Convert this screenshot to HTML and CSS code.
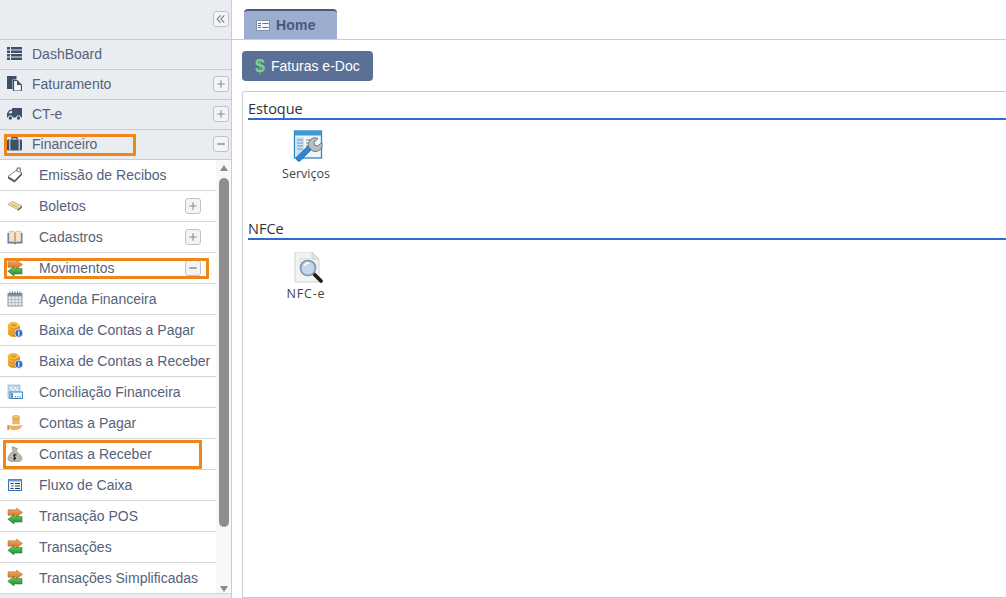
FILE: index.html
```html
<!DOCTYPE html>
<html lang="pt">
<head>
<meta charset="utf-8">
<title>Home</title>
<link rel="stylesheet" href="styles.css">
</head>
<body>
<svg class="defs" width="0" height="0">
  <defs>
    <linearGradient id="orangeG" x1="0" y1="0" x2="0" y2="1"><stop offset="0" stop-color="#f6b26a"/><stop offset="1" stop-color="#d9691c"/></linearGradient>
    <linearGradient id="greenG" x1="0" y1="0" x2="0" y2="1"><stop offset="0" stop-color="#6fd05c"/><stop offset="1" stop-color="#178a2a"/></linearGradient>
    <linearGradient id="coinG" x1="0" y1="0" x2="1" y2="0"><stop offset="0" stop-color="#f6b93c"/><stop offset="1" stop-color="#df7f14"/></linearGradient>
    <symbol id="swap" viewBox="0 0 16 16">
      <path d="M1 1.800h8.500V0L15.500 4.500 9.500 9V7.200H1z" fill="url(#orangeG)" stroke="#8c6a3a" stroke-width=".5"/>
      <path d="M15 8.500H7V6.500L.8 11.200 7 16v-2h8z" fill="url(#greenG)" stroke="#1f6e2a" stroke-width=".5"/>
    </symbol>
    <symbol id="coins" viewBox="0 0 16 16">
      <path d="M1 4.200v7.300C1 13.500 3.500 15 7 15s6-1.500 6-3.500V4.200z" fill="url(#coinG)"/>
      <path d="M1 8.100c1 1.700 3.500 2.500 6 2.500s5-.8 6-2.500M1 11c1 1.700 3.500 2.500 6 2.500s5-.8 6-2.500" fill="none" stroke="#c8781c" stroke-width=".7"/>
      <ellipse cx="6.500" cy="3.500" rx="5.500" ry="3" fill="#f8c24a" stroke="#dc8a1c" stroke-width=".6"/>
      <ellipse cx="6.500" cy="3.300" rx="3" ry="1.400" fill="#e9961f"/>
      <circle cx="11.800" cy="11.200" r="4" fill="#2a68bd" stroke="#eef3fa" stroke-width=".8"/>
      <rect x="11.200" y="8.800" width="1.200" height="5" fill="#fff"/>
    </symbol>
    <symbol id="plus" viewBox="0 0 15 15">
      <path d="M3.500 7.500h8M7.500 3.500v8" stroke="#8a8f96" stroke-width="1.200"/>
    </symbol>
    <symbol id="minus" viewBox="0 0 15 15">
      <path d="M3.500 7.500h8" stroke="#8a8f96" stroke-width="1.600"/>
    </symbol>
  </defs>
</svg>

<div class="app">
  <aside class="sidebar">
    <div class="side-top">
      <span class="tog"><svg viewBox="0 0 15 15"><path d="M7 3.500 3.500 7.500 7 11.500M11 3.500 7.500 7.500 11 11.500" fill="none" stroke="#777" stroke-width="1.200"/></svg></span>
    </div>

    <div class="group">
      <svg class="gicon" viewBox="0 0 15 15"><path d="M0 1h3v2.400H0zM4 1h11v2.400H4zM0 4.500h3v2.400H0zM4 4.500h11v2.400H4zM0 8h3v2.400H0zM4 8h11v2.400H4zM0 11.500h3v2.400H0zM4 11.500h11v2.400H4z" fill="#3f4f68"/></svg>
      <span>DashBoard</span>
    </div>
    <div class="group">
      <svg class="gicon" viewBox="0 0 15 15"><path d="M0 0h9.500v3.500H5.500V13H0z" fill="#3f4f68"/><path d="M6.500 4.500H10l4.500 4.500v6h-8z" fill="#f4f6f8" stroke="#3f4f68" stroke-width="1.200"/><path d="M10 4.500V9h4.500z" fill="#3f4f68"/></svg>
      <span>Faturamento</span>
      <span class="tog"><svg><use href="#plus"/></svg></span>
    </div>
    <div class="group">
      <svg class="gicon" viewBox="0 0 15 15"><path d="M5 2h10v9.500H0V7.200L2.500 3.800H5z" fill="#3f4f68"/><path d="M1.500 7.300 3.200 5H5v2.300z" fill="#e9edf1"/><circle cx="3.300" cy="12" r="2.200" fill="#3f4f68" stroke="#e9edf1"/><circle cx="11.500" cy="12" r="2.200" fill="#3f4f68" stroke="#e9edf1"/></svg>
      <span>CT-e</span>
      <span class="tog"><svg><use href="#plus"/></svg></span>
    </div>
    <div class="group">
      <svg class="gicon" viewBox="0 0 15 15"><path d="M5 3.500V1.500h5v2" fill="none" stroke="#3f4f68" stroke-width="1.300"/><rect x="0" y="3.500" width="15" height="11" rx="1.200" fill="#3f4f68"/><path d="M2.800 3.500v11M12.200 3.500v11" stroke="#e9edf1"/></svg>
      <span>Financeiro</span>
      <span class="tog"><svg><use href="#minus"/></svg></span>
      <i class="mark mark-fin"></i>
    </div>

    <div class="sub">
      <ul class="sub-list">
        <li>
          <svg class="icon" viewBox="0 0 16 16"><path d="M1 9.500v2l6.500 4 7.500-7.500V6z" fill="#4d5564"/><path d="M1 9.500 9 3.500l6 2.500-7.500 7.500z" fill="#fff" stroke="#5c6472" stroke-width=".8"/><path d="M9.500 4 10.500 1h2.500l.5 3.500" fill="none" stroke="#68707c" stroke-width="1.200"/></svg>
          Emissão de Recibos
        </li>
        <li>
          <svg class="icon" viewBox="0 0 16 16"><path d="M1 6.500 5.500 3.500 15 8l-4.500 3.500z" fill="#e9dca4" stroke="#b3a572" stroke-width=".8"/><path d="M5 6.500l5 2.500" stroke="#bfae70"/><path d="M10.500 11.500 15 8v1.500l-4 3.500z" fill="#5c6b55"/></svg>
          Boletos
          <span class="tog"><svg><use href="#plus"/></svg></span>
        </li>
        <li>
          <svg class="icon" viewBox="0 0 16 16"><path d="M.5 4v10.500H6.500L8 15.500 9.500 14.500h6V4" fill="#4f7cb0"/><path d="M2 2.500c2.500-.8 4.800-.4 6 1 1.200-1.400 3.500-1.800 6-1v10.500c-2.500-.6-4.800-.4-6 1-1.200-1.400-3.500-1.600-6-1z" fill="#f4e3c6" stroke="#c9a97a" stroke-width=".6"/><path d="M8 3.500V14" stroke="#8a7a60"/></svg>
          Cadastros
          <span class="tog"><svg><use href="#plus"/></svg></span>
        </li>
        <li>
          <svg class="icon"><use href="#swap"/></svg>
          Movimentos
          <span class="tog"><svg><use href="#minus"/></svg></span>
          <i class="mark mark-mov"></i>
        </li>
        <li>
          <svg class="icon" viewBox="0 0 16 16"><rect x="1" y="2.500" width="14" height="12.500" fill="#e6eaee" stroke="#8b96a3"/><rect x="1" y="2.500" width="14" height="3" fill="#8b96a3"/><path d="M3 .5v3M5.500 .5v3M8 .5v3M10.500 .5v3M13 .5v3" stroke="#5d6672"/><path d="M1 8.500h14M1 11.500h14M4.500 5.500V15M8 5.500V15M11.500 5.500V15" stroke="#a5aeb8" stroke-width=".7"/></svg>
          Agenda Financeira
        </li>
        <li><svg class="icon"><use href="#coins"/></svg>Baixa de Contas a Pagar</li>
        <li><svg class="icon"><use href="#coins"/></svg>Baixa de Contas a Receber</li>
        <li>
          <svg class="icon" viewBox="0 0 16 16"><rect x="1" y="1" width="12" height="13" fill="#bcd8f0" stroke="#8db4d6" stroke-width=".7"/><path d="M3 3h2v2H3zM7 3h2v2H7zM5 5h2v2H5zM9 5h2v2H9z" fill="#e4f0fa"/><rect x="3" y="8" width="12.500" height="6.500" fill="#fff" stroke="#2f86c8"/><path d="M5 10v3M4 10h2M4 13h2M8 12.800h1M10.300 12.800h1M12.600 12.800h1" stroke="#2a2f38" stroke-width=".9"/></svg>
          Conciliação Financeira
        </li>
        <li>
          <svg class="icon" viewBox="0 0 16 16"><ellipse cx="9" cy="2.500" rx="3.500" ry="2" fill="#f5c878" stroke="#c48c36" stroke-width=".6"/><rect x="5.500" y="3.500" width="7" height="2.500" rx="1" fill="#eeb053" stroke="#c48c36" stroke-width=".4"/><rect x="5.500" y="6.500" width="7" height="2.500" rx="1" fill="#f2bc62" stroke="#c48c36" stroke-width=".4"/><path d="M2 10.500h3.500l3 .5 7-1-2 3.500-4 1.500H5L2 13.500z" fill="#efb25a"/><rect x=".5" y="10" width="1.200" height="5" fill="#9c7230"/></svg>
          Contas a Pagar
        </li>
        <li>
          <svg class="icon" viewBox="0 0 16 16"><path d="M5 .5 10.500 2.500 9 5.500c3 1.500 6 4.800 6 7.500 0 2-3 2.800-7 2.800-3.500 0-7-.6-7-2.800 0-3 2.200-6 5-7.700z" fill="#b9b9b0" stroke="#85857c" stroke-width=".6"/><path d="M7.500 7.500v7M9.500 9c-2.500-1-3.700.6-2 1.600s1.500 3-1.500 1.900" fill="none" stroke="#2e2e2a" stroke-width="1.100"/></svg>
          Contas a Receber
          <i class="mark mark-rec"></i>
        </li>
        <li>
          <svg class="icon" viewBox="0 0 16 16"><rect x="1.500" y="2.500" width="13" height="11" fill="#f4f7fb" stroke="#3f6ea8"/><rect x="1.500" y="2.500" width="13" height="2" fill="#6f9ad0"/><path d="M3.500 6.500h3M4.500 9h2M3.500 11.500h3M8 6.500h5M8 9h5M8 11.500h5" stroke="#2d3a50"/></svg>
          Fluxo de Caixa
        </li>
        <li><svg class="icon"><use href="#swap"/></svg>Transação POS</li>
        <li><svg class="icon"><use href="#swap"/></svg>Transações</li>
        <li><svg class="icon"><use href="#swap"/></svg>Transações Simplificadas</li>
      </ul>
      <div class="scroll">
        <span class="arrow up"></span>
        <span class="thumb"></span>
        <span class="arrow down"></span>
      </div>
    </div>
  </aside>

  <main class="main">
    <nav class="tabs">
      <div class="tab">
        <svg class="tab-icon" viewBox="0 0 14 11"><rect x=".5" y=".5" width="13" height="10" fill="#f2f5fa" stroke="#8093b5"/><path d="M2 3.500h3M2 5.500h3M2 7.500h3M6.500 3.500h6M6.500 7.500h6" stroke="#5f7399"/></svg>
        Home
      </div>
    </nav>
    <div class="content">
      <button class="btn" type="button"><span class="dollar">$</span>Faturas e-Doc</button>
      <section class="panel">
        <h2 class="sec-title">Estoque</h2>
        <div class="tiles">
          <div class="tile">
            <svg class="tile-icon" viewBox="0 0 32 32">
              <rect x="1.500" y="1" width="27" height="27" fill="#eef5fb" stroke="#2b86c4" stroke-width="1.300"/>
              <rect x="1.500" y="1" width="27" height="4.500" fill="#3b9ad8"/>
              <rect x="3" y="7" width="8" height="19" fill="#cfe2f2"/>
              <path d="M4 10h6M4 13h6M4 16h6M4 19h6M13 10h7M13 13h7M13 16h5M13 19h3" stroke="#93b0cc" stroke-width="1.300"/>
              <path d="M3.500 27 15 16l3.500 3.500L7 31c-2 1-4.500-1.500-3.500-4z" fill="#2e88d4" stroke="#1d5d9a" stroke-width=".7"/>
              <path d="M15.500 17c-1.500-6 4-11 9.500-8.500l-4 3.800.8 3 3 .7 4-3.600c2 5.500-3.500 11-9.300 8.600z" fill="#b8bdc3" stroke="#666c72" stroke-width=".9"/>
            </svg>
            <span>Serviços</span>
          </div>
        </div>
        <h2 class="sec-title">NFCe</h2>
        <div class="tiles">
          <div class="tile tile-low">
            <svg class="tile-icon" viewBox="0 0 32 32">
              <path d="M2 0h17l7 7v23H2z" fill="#f1f2f4" stroke="#d2d5d9"/>
              <path d="M19 0v7h7z" fill="#dfe2e6" stroke="#c9ccd0" stroke-width=".7"/>
              <path d="M6 7h11M6 10h3" stroke="#d0d3d8"/>
              <path d="m20 21 8 8" stroke="#1c1c1c" stroke-width="3.800" stroke-linecap="round"/>
              <circle cx="15" cy="16" r="7.500" fill="#c2d6ec" stroke="#8595a8" stroke-width="1.700"/>
              <path d="M11 14c1-2 3-3 5-3" fill="none" stroke="#fff" stroke-width="1.300"/>
            </svg>
            <span class="tile-wide">NFC-e</span>
          </div>
        </div>
      </section>
    </div>
  </main>
</div>
</body>
</html>
```

FILE: styles.css
```css
* { box-sizing: border-box; }
html, body { margin: 0; height: 100%; overflow: hidden; background: #fff; }
body { font-family: "Liberation Sans", Arial, sans-serif; font-size: 14px; color: #55627a; }
.defs { position: absolute; }

.app { display: flex; height: 598px; }

.sidebar {
  width: 232px;
  flex: none;
  background: #e9edf1;
  border-right: 1px solid #c9cdd1;
  display: flex;
  flex-direction: column;
}
.side-top {
  height: 40px;
  flex: none;
  border-bottom: 1px solid #c9cdd1;
  display: flex;
  justify-content: flex-end;
  padding: 11px 2px 0 0;
}
.tog {
  width: 16px;
  height: 16px;
  flex: none;
  border: 1px solid #bfc3c7;
  border-radius: 3px;
  background: #f3f4f5;
  display: block;
  margin-left: auto;
}
.tog svg { display: block; width: 14px; height: 14px; }

.group {
  position: relative;
  height: 30px;
  flex: none;
  border-bottom: 1px solid #c9cdd1;
  display: flex;
  align-items: center;
  padding: 0 2px 2px 7px;
}
.group .tog { margin-top: 1px; }
.gicon { width: 15px; height: 15px; flex: none; margin-right: 10px; }

.sub { flex: none; height: 434px; display: flex; background: #fff; border-bottom: 1px solid #d5d8db; }
.sub-list { list-style: none; margin: 0; padding: 0; width: 216px; flex: none; }
.sub-list li {
  position: relative;
  height: 31px;
  border-bottom: 1px solid #d3d5d8;
  display: flex;
  align-items: center;
  padding: 0 15px 0 7px;
  white-space: nowrap;
}
.icon { width: 16px; height: 16px; flex: none; margin-right: 16px; }

.scroll {
  width: 15px;
  flex: none;
  background: #f8f8f8;
  display: flex;
  flex-direction: column;
  align-items: center;
  padding: 5px 0 0;
}
.thumb { width: 10px; height: 349px; margin: 7px 0 59px; background: #8e8e8e; border-radius: 5px; }
.arrow { width: 0; height: 0; border-left: 4.500px solid transparent; border-right: 4.500px solid transparent; }
.arrow.up { border-bottom: 6px solid #8a8a8a; }
.arrow.down { border-top: 6px solid #8a8a8a; }

.mark { position: absolute; border: 3px solid #f08519; border-radius: 1px; pointer-events: none; }
.mark-fin { left: 4px; top: 4px; width: 132px; height: 22px; }
.mark-mov { left: 4px; top: 5px; width: 205px; height: 21px; }
.mark-rec { left: 3px; top: 1px; width: 199px; height: 29px; }

.main { flex: 1; min-width: 0; display: flex; flex-direction: column; }
.tabs { height: 40px; flex: none; border-bottom: 1px solid #c9cdd1; padding: 9px 0 0 12px; }
.tab {
  width: 93px;
  height: 30px;
  background: #9dadd0;
  border-top: 2px solid #4b5b7b;
  border-radius: 4px 4px 0 0;
  display: flex;
  align-items: center;
  padding: 0 0 0 12px;
  font-weight: bold;
  font-size: 14px;
  color: #46587d;
  letter-spacing: .2px;
}
.tab-icon { width: 14px; height: 11px; margin-right: 6px; flex: none; }

.content { flex: 1; min-height: 0; display: flex; flex-direction: column; align-items: flex-start; padding: 11px 0 0 10px; }
.btn {
  width: 131px;
  height: 30px;
  flex: none;
  border: 0;
  border-radius: 4px;
  background: #5a7097;
  color: #fff;
  font: 14px "Liberation Sans", Arial, sans-serif;
  padding: 0 0 0 13px;
  display: flex;
  align-items: center;
}
.dollar { color: #7dcf8e; font-weight: bold; font-size: 18px; margin-right: 6px; }

.panel {
  flex: 1;
  align-self: stretch;
  margin: 10px -4px 0 0;
  border: 1px solid #c9cdd1;
  border-radius: 3px 0 0 0;
  padding: 9px 0 0 5px;
}
.sec-title {
  margin: 0;
  height: 19px;
  border-bottom: 2px solid #2f6bce;
  font: 400 14.5px/16px "Open Sans", sans-serif;
  color: #333;
}
.tiles { height: 101px; display: flex; padding: 10px 0 0 0; }
.tile {
  width: 116px;
  display: flex;
  flex-direction: column;
  align-items: center;
  font: 12.5px/16px "Open Sans", sans-serif;
  color: #444;
}
.tile-low { padding-top: 2px; }
.tile-low .tile-icon { margin-bottom: 2px; }
.tile-wide { letter-spacing: .8px; }
.tile-icon { width: 32px; height: 32px; margin: 0 0 4px 6px; }
```
